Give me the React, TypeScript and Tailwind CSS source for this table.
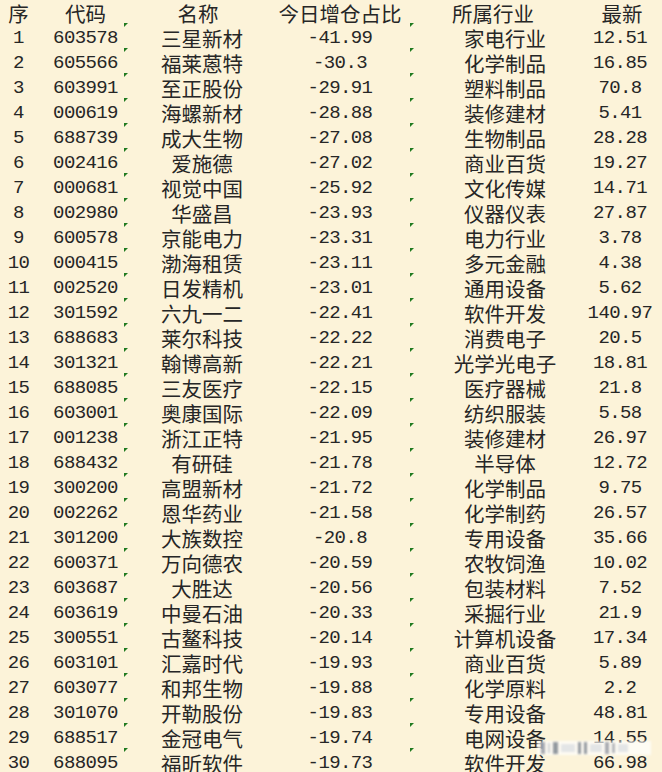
const rows: [string, string, string, string, string][] = [
  ["603578", "三星新材", "-41.99", "家电行业", "12.51"],
  ["605566", "福莱蒽特", "-30.3", "化学制品", "16.85"],
  ["603991", "至正股份", "-29.91", "塑料制品", "70.8"],
  ["000619", "海螺新材", "-28.88", "装修建材", "5.41"],
  ["688739", "成大生物", "-27.08", "生物制品", "28.28"],
  ["002416", "爱施德", "-27.02", "商业百货", "19.27"],
  ["000681", "视觉中国", "-25.92", "文化传媒", "14.71"],
  ["002980", "华盛昌", "-23.93", "仪器仪表", "27.87"],
  ["600578", "京能电力", "-23.31", "电力行业", "3.78"],
  ["000415", "渤海租赁", "-23.11", "多元金融", "4.38"],
  ["002520", "日发精机", "-23.01", "通用设备", "5.62"],
  ["301592", "六九一二", "-22.41", "软件开发", "140.97"],
  ["688683", "莱尔科技", "-22.22", "消费电子", "20.5"],
  ["301321", "翰博高新", "-22.21", "光学光电子", "18.81"],
  ["688085", "三友医疗", "-22.15", "医疗器械", "21.8"],
  ["603001", "奥康国际", "-22.09", "纺织服装", "5.58"],
  ["001238", "浙江正特", "-21.95", "装修建材", "26.97"],
  ["688432", "有研硅", "-21.78", "半导体", "12.72"],
  ["300200", "高盟新材", "-21.72", "化学制品", "9.75"],
  ["002262", "恩华药业", "-21.58", "化学制药", "26.57"],
  ["301200", "大族数控", "-20.8", "专用设备", "35.66"],
  ["600371", "万向德农", "-20.59", "农牧饲渔", "10.02"],
  ["603687", "大胜达", "-20.56", "包装材料", "7.52"],
  ["603619", "中曼石油", "-20.33", "采掘行业", "21.9"],
  ["300551", "古鳌科技", "-20.14", "计算机设备", "17.34"],
  ["603101", "汇嘉时代", "-19.93", "商业百货", "5.89"],
  ["603077", "和邦生物", "-19.88", "化学原料", "2.2"],
  ["301070", "开勒股份", "-19.83", "专用设备", "48.81"],
  ["688517", "金冠电气", "-19.74", "电网设备", "14.55"],
  ["688095", "福昕软件", "-19.73", "软件开发", "66.98"],
]

const cols = "grid grid-cols-[37px_97px_136px_140px_190px_40px] grid-rows-[25px]"
const cjk = "font-['Noto_Sans_CJK_SC',sans-serif] text-[20.5px]"
const num = "font-['Liberation_Mono',monospace] text-[19px] tracking-[-0.6px]"
const cell = "flex h-[25px] items-center justify-center whitespace-nowrap leading-none"

function Flag({ left }: { left: string }) {
  return (
    <span
      className={`absolute top-[-3px] ${left} h-[4px] w-[4px] bg-[#1f7a1f] [clip-path:polygon(0_0,100%_0,0_100%)]`}
    />
  )
}

export default function App() {
  return (
    <div className="relative h-[772px] w-[662px] overflow-hidden bg-[#fcf3d9] pt-[1px] text-[#262626]">
      <div className={`${cols} h-[25px]`}>
        <div className={`${cell} ${cjk}`}>序</div>
        <div className={`${cell} ${cjk}`}>代码</div>
        <div className={`${cell} ${cjk} pr-[8px]`}>名称</div>
        <div className={`${cell} ${cjk}`}>今日增仓占比</div>
        <div className={`${cell} ${cjk} pr-[24px]`}>所属行业</div>
        <div className={`${cell} ${cjk} pl-[4px]`}>最新</div>
      </div>

      {rows.map(([code, name, pct, sector, price], i) => (
        <div key={code} className={`${cols} relative h-[25px]`}>
          <Flag left="left-[124px]" />
          <Flag left="left-[410px]" />
          <div className={`${cell} ${num}`}>{i + 1}</div>
          <div className={`${cell} ${num}`}>{code}</div>
          <div className={`${cell} ${cjk}`}>{name}</div>
          <div className={`${cell} ${num}`}>{pct}</div>
          <div className={`${cell} ${cjk}`}>{sector}</div>
          <div className={`${cell} ${num}`}>{price}</div>
        </div>
      ))}

      {/* blurred watermark band */}
      <div className="absolute left-[537px] top-[741px] flex h-[14px] w-[114px] items-center gap-[3px] bg-white/70 px-[4px] blur-[1px]">
        <span className="h-[12px] w-[4px] bg-gray-500/60" />
        <span className="h-[10px] w-[2px] bg-gray-400/50" />
        <span className="h-[12px] w-[5px] bg-gray-600/60" />
        <span className="h-[8px] w-[14px] bg-gray-300/60" />
        <span className="h-[12px] w-[3px] bg-gray-600/60" />
        <span className="h-[12px] w-[3px] bg-gray-600/60" />
        <span className="h-[8px] w-[12px] bg-gray-300/60" />
        <span className="h-[12px] w-[4px] bg-gray-500/60" />
        <span className="h-[10px] w-[3px] bg-gray-500/50" />
        <span className="h-[8px] w-[10px] bg-gray-300/60" />
      </div>
    </div>
  )
}
